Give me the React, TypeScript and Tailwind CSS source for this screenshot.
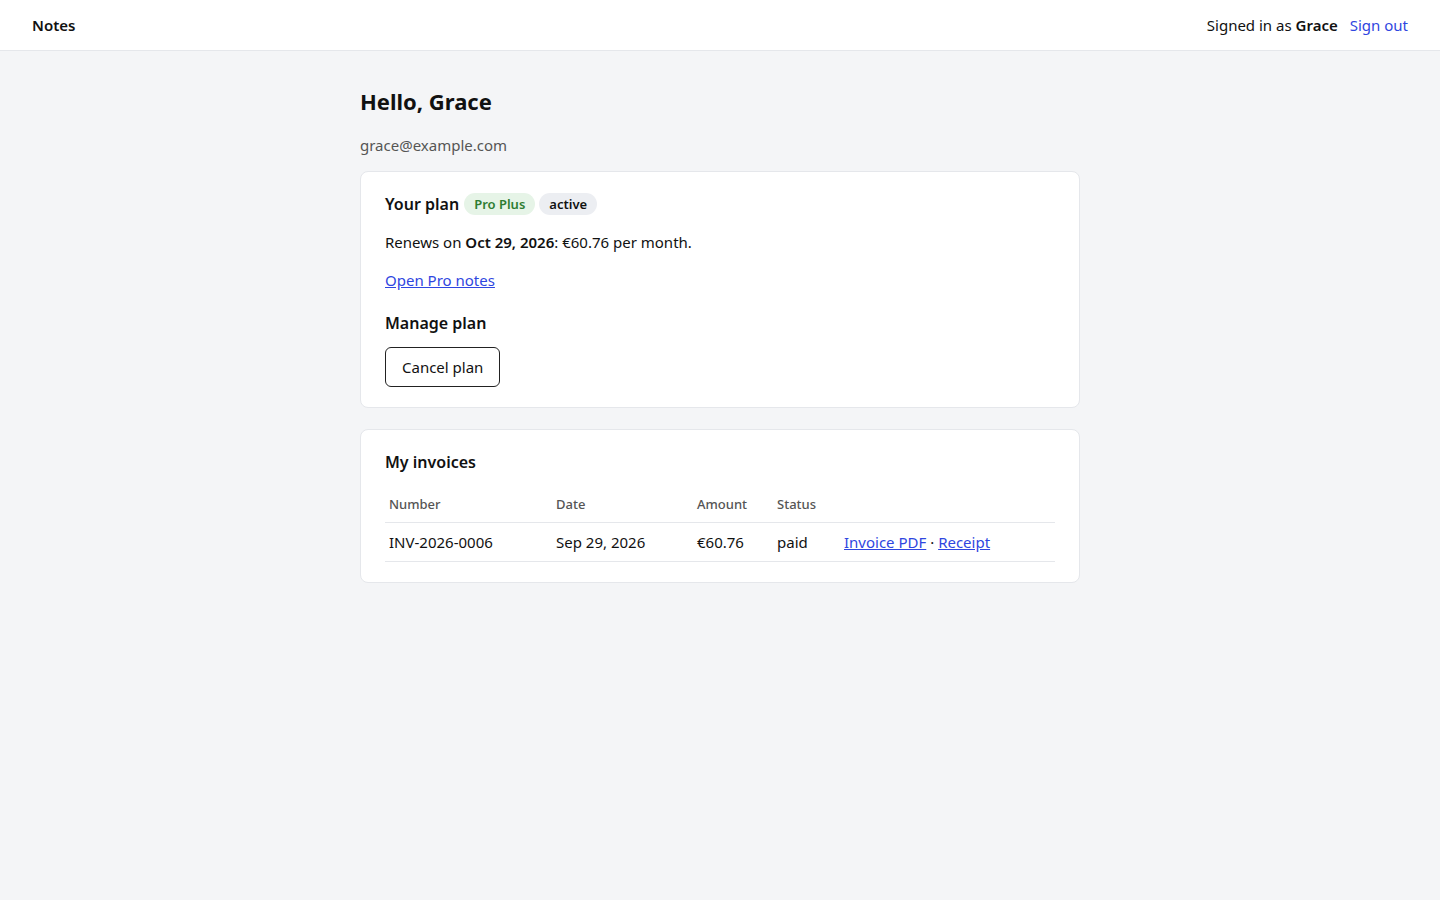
import React from 'react';

const App = () => {
  return (
    <div className="min-h-screen bg-[#f4f5f7] text-[#111] [font-family:Inter,'Liberation_Sans',sans-serif]">
      <header className="h-[51px] bg-white border-b border-[#e5e7eb] flex items-center justify-between px-8">
        <span className="text-[15px] font-semibold">Notes</span>
        <div className="flex items-center gap-3 text-[15px]">
          <span>Signed in as <b className="font-semibold">Grace</b></span>
          <a className="text-[#2f46e0]">Sign out</a>
        </div>
      </header>

      <main className="w-[720px] mx-auto pt-[36px]">
        <h1 className="text-[22px] font-bold leading-[28px]">Hello, Grace</h1>
        <p className="text-[15px] text-[#555] mt-[20px] leading-[20px]">grace@example.com</p>

        <section className="mt-[16px] bg-white border border-[#e5e7eb] rounded-lg px-6 pt-[20px] pb-[20px]">
          <div className="flex items-center gap-1 leading-[24px]">
            <span className="text-[16px] font-semibold">Your plan</span>
            <span className="ml-[1px] px-[10px] py-[1px] rounded-full bg-[#e6f4e7] text-[#2e7d32] text-[13px] font-semibold leading-[20px]">Pro Plus</span>
            <span className="px-[10px] py-[1px] rounded-full bg-[#eceef2] text-[13px] font-semibold leading-[20px]">active</span>
          </div>
          <p className="mt-[15px] text-[15px] leading-[22px]">Renews on <b className="font-semibold">Oct 29, 2026</b>: €60.76 per month.</p>
          <p className="mt-[16px] text-[15px] leading-[22px]"><a className="text-[#2f46e0] underline">Open Pro notes</a></p>
          <h2 className="mt-[20px] text-[16px] font-semibold leading-[24px]">Manage plan</h2>
          <button className="mt-[12px] h-[40px] px-4 border border-[#222] rounded-md text-[15px] bg-white">Cancel plan</button>
        </section>

        <section className="mt-[21px] bg-white border border-[#e5e7eb] rounded-lg px-6 pt-[20px] pb-[20px]">
          <h2 className="text-[16px] font-semibold leading-[24px]">My invoices</h2>
          <table className="mt-[12px] w-full text-left border-collapse">
            <thead>
              <tr className="text-[13px] text-[#555] border-b border-[#e5e7eb] leading-[20px]">
                <th className="font-medium px-1 py-[8px] w-[167px]">Number</th>
                <th className="font-medium px-1 py-[8px] w-[141px]">Date</th>
                <th className="font-medium px-1 py-[8px] w-[80px]">Amount</th>
                <th className="font-medium px-1 py-[8px] w-[67px]">Status</th>
                <th className="px-1 py-[8px]"></th>
              </tr>
            </thead>
            <tbody>
              <tr className="text-[15px] border-b border-[#e5e7eb] leading-[22px]">
                <td className="px-1 py-[8px]">INV-2026-0006</td>
                <td className="px-1 py-[8px]">Sep 29, 2026</td>
                <td className="px-1 py-[8px]">€60.76</td>
                <td className="px-1 py-[8px]">paid</td>
                <td className="px-1 py-[8px]">
                  <a className="text-[#2f46e0] underline">Invoice PDF</a> · <a className="text-[#2f46e0] underline">Receipt</a>
                </td>
              </tr>
            </tbody>
          </table>
        </section>
      </main>
    </div>
  );
};

export default App;
